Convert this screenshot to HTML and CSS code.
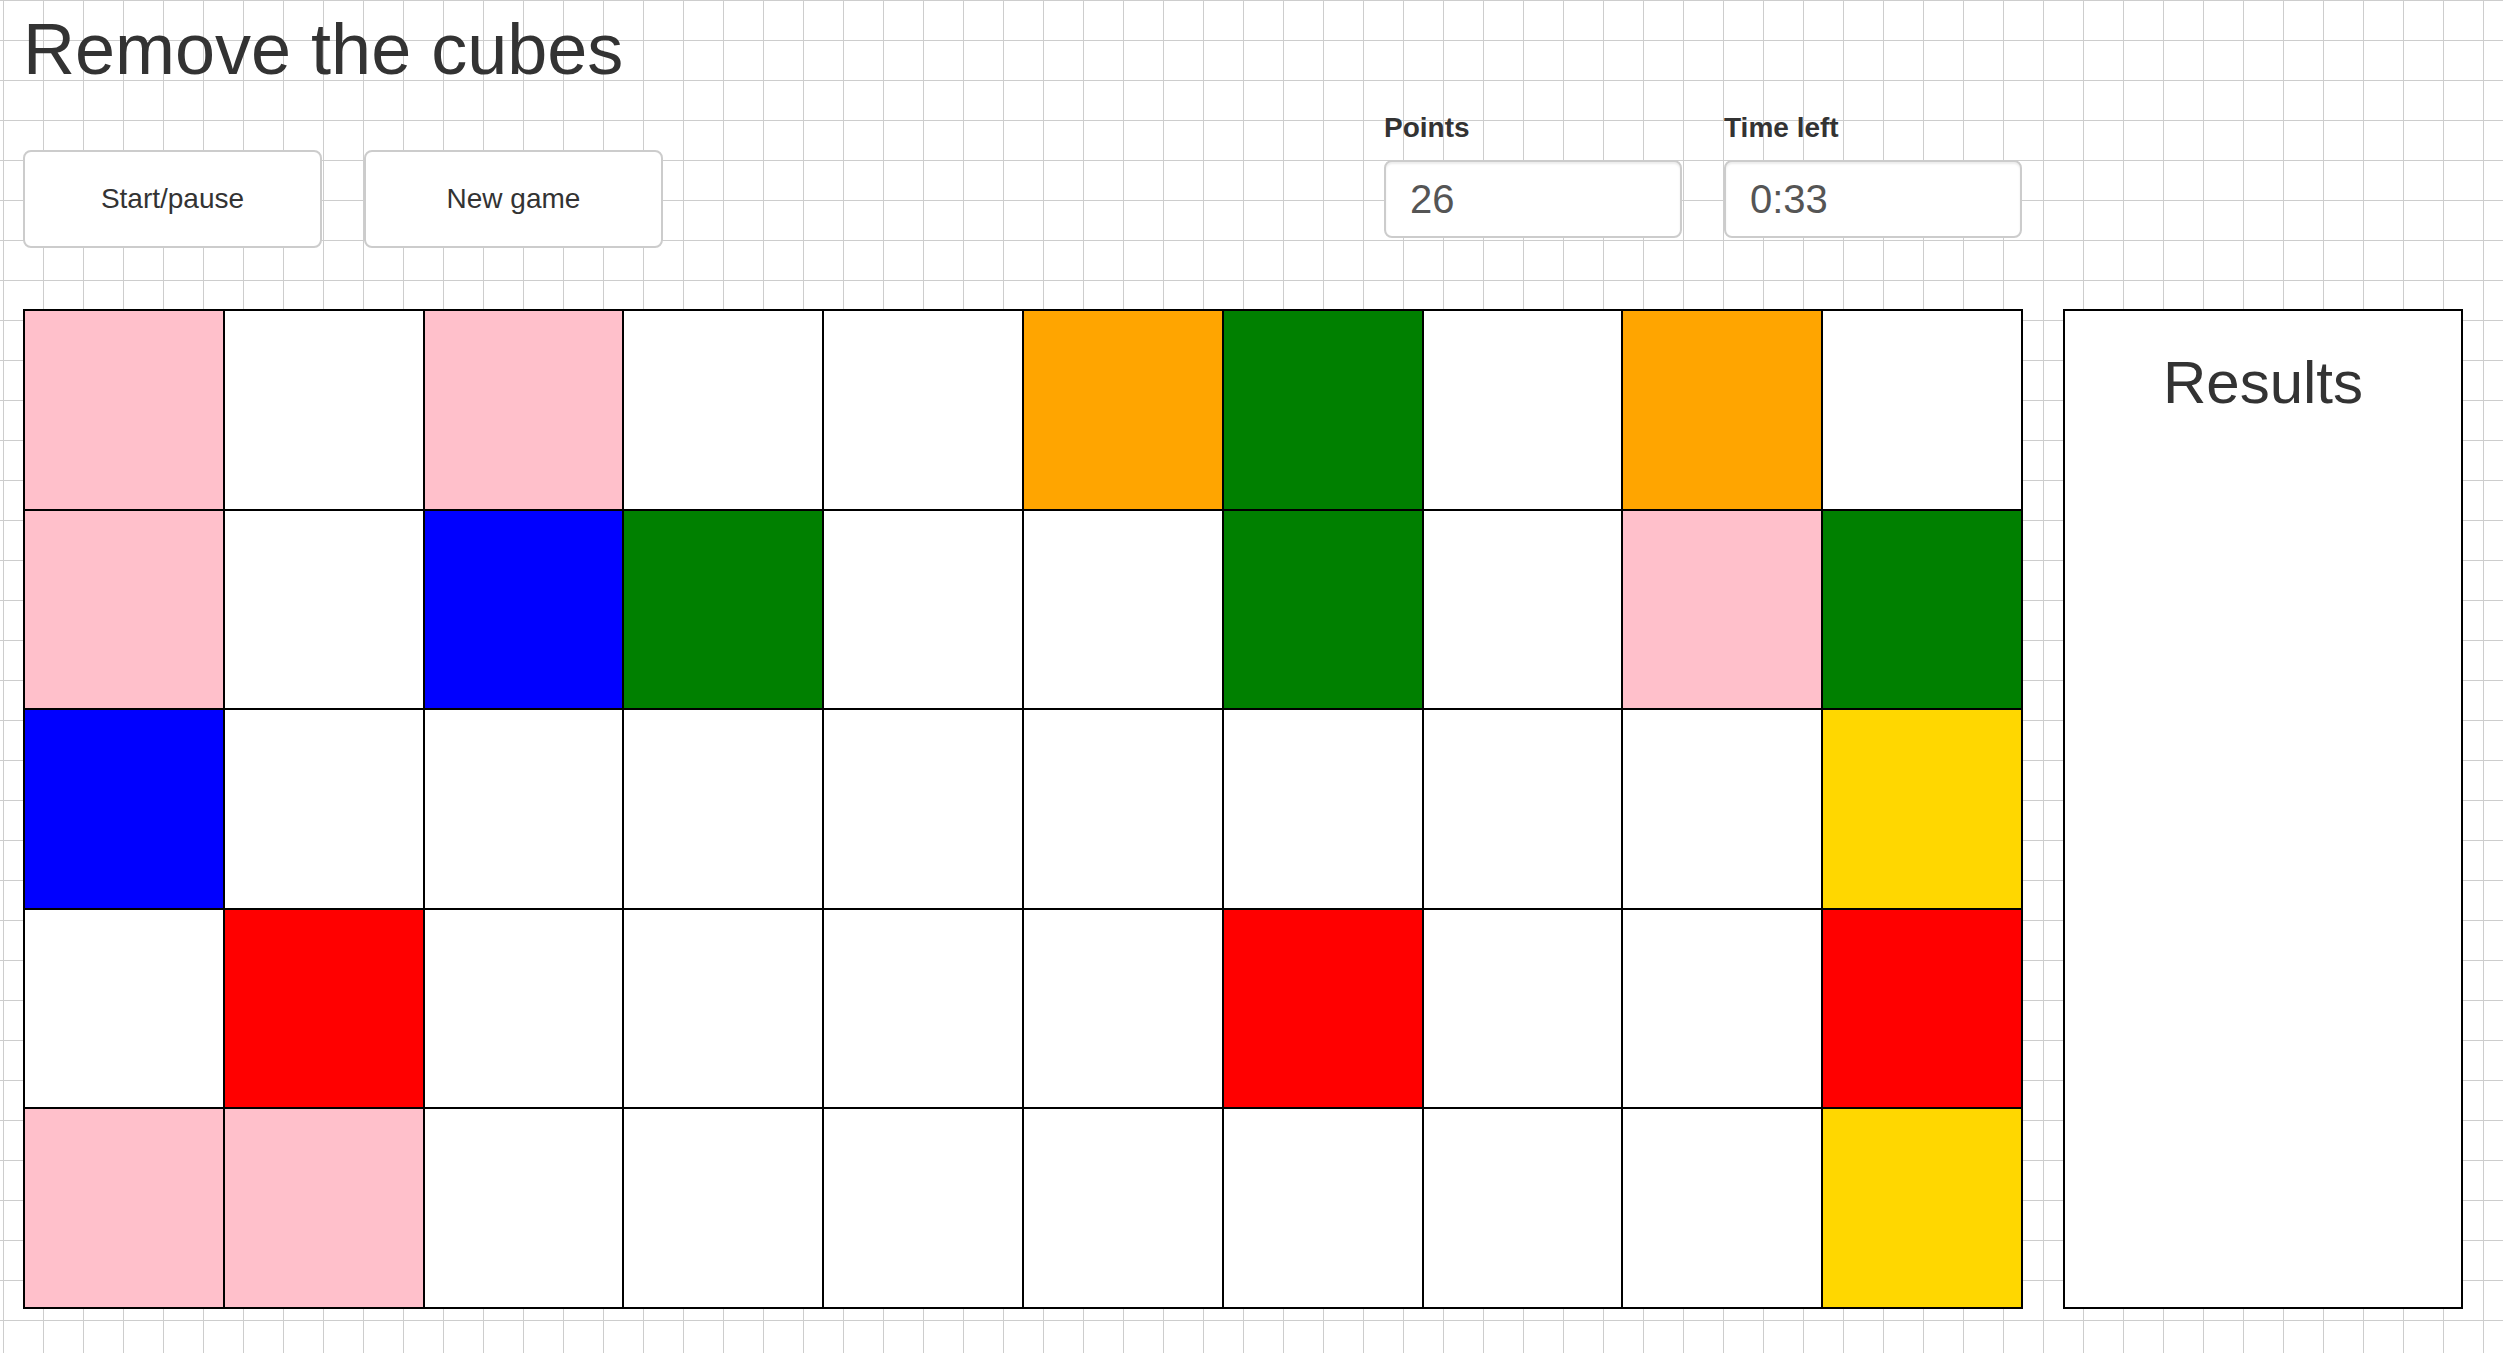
FILE: index.html
```html
<!DOCTYPE html>
<html lang="en">
<head>
<meta charset="utf-8">
<title>Remove the cubes</title>
<link rel="stylesheet" href="styles.css">
</head>
<body>
<div class="page">
  <h1 class="title">Remove the cubes</h1>
  <div class="controls">
    <div class="buttons">
      <button class="btn">Start/pause</button>
      <button class="btn">New game</button>
    </div>
    <div class="fields">
      <div class="field">
        <label class="field-label">Points</label>
        <div class="field-input">26</div>
      </div>
      <div class="field">
        <label class="field-label">Time left</label>
        <div class="field-input">0:33</div>
      </div>
    </div>
  </div>
  <div class="main">
    <div class="board">
      <div class="cell pink"></div><div class="cell"></div><div class="cell pink"></div><div class="cell"></div><div class="cell"></div><div class="cell orange"></div><div class="cell green"></div><div class="cell"></div><div class="cell orange"></div><div class="cell"></div>
      <div class="cell pink"></div><div class="cell"></div><div class="cell blue"></div><div class="cell green"></div><div class="cell"></div><div class="cell"></div><div class="cell green"></div><div class="cell"></div><div class="cell pink"></div><div class="cell green"></div>
      <div class="cell blue"></div><div class="cell"></div><div class="cell"></div><div class="cell"></div><div class="cell"></div><div class="cell"></div><div class="cell"></div><div class="cell"></div><div class="cell"></div><div class="cell gold"></div>
      <div class="cell"></div><div class="cell red"></div><div class="cell"></div><div class="cell"></div><div class="cell"></div><div class="cell"></div><div class="cell red"></div><div class="cell"></div><div class="cell"></div><div class="cell red"></div>
      <div class="cell pink"></div><div class="cell pink"></div><div class="cell"></div><div class="cell"></div><div class="cell"></div><div class="cell"></div><div class="cell"></div><div class="cell"></div><div class="cell"></div><div class="cell gold"></div>
    </div>
    <div class="results">
      <h2 class="results-title">Results</h2>
    </div>
  </div>
</div>
</body>
</html>
```
FILE: styles.css
```css
html {
  background-color: #ffffff;
  background-image:
    linear-gradient(to right, #cdcdcd 1px, transparent 1px),
    linear-gradient(to bottom, #cdcdcd 1px, transparent 1px);
  background-size: 40px 40px;
  background-position: 3px 0;
  min-height: 100%;
}

body {
  margin: 0;
  font-family: "Liberation Sans", Arial, Helvetica, sans-serif;
  color: #333333;
}

.page {
  padding: 9px 0 0 23px;
}

.title {
  margin: 0;
  font-size: 72px;
  font-weight: normal;
  line-height: 80px;
  height: 80px;
  color: #333333;
}

.controls {
  margin-top: 19px;
  width: 1999px;
  display: flex;
  justify-content: space-between;
  align-items: flex-start;
}

.buttons {
  display: flex;
  gap: 42px;
  margin-top: 42px;
}

.btn {
  width: 299px;
  height: 98px;
  box-sizing: border-box;
  background: #ffffff;
  border: 2px solid #cccccc;
  border-radius: 8px;
  font-family: "Liberation Sans", Arial, Helvetica, sans-serif;
  font-size: 28px;
  color: #333333;
  padding: 0;
  cursor: pointer;
}

.fields {
  display: flex;
  gap: 42px;
}

.field {
  width: 298px;
  display: flex;
  flex-direction: column;
}

.field-label {
  font-size: 28px;
  font-weight: bold;
  line-height: 40px;
  height: 40px;
  color: #333333;
  margin-bottom: 12px;
}

.field-input {
  height: 78px;
  box-sizing: border-box;
  background: #ffffff;
  border: 2px solid #cccccc;
  border-radius: 8px;
  box-shadow: inset 0 2px 2px rgba(0, 0, 0, 0.075);
  padding: 0 24px;
  font-size: 40px;
  color: #555555;
  display: flex;
  align-items: center;
}

.main {
  margin-top: 61px;
  display: flex;
  gap: 40px;
  align-items: flex-start;
}

.board {
  width: 2000px;
  height: 1000px;
  box-sizing: border-box;
  background: #000000;
  padding: 2px;
  display: grid;
  grid-template-columns: repeat(10, 1fr);
  grid-template-rows: repeat(5, 1fr);
  gap: 2px;
}

.cell {
  background: #ffffff;
}

.cell.pink { background: #ffc0cb; }
.cell.orange { background: #ffa500; }
.cell.green { background: #008000; }
.cell.blue { background: #0000ff; }
.cell.gold { background: #ffd700; }
.cell.red { background: #ff0000; }

.results {
  width: 400px;
  height: 1000px;
  box-sizing: border-box;
  background: #ffffff;
  border: 2px solid #000000;
  padding-top: 39px;
  text-align: center;
}

.results-title {
  margin: 0;
  font-size: 60px;
  font-weight: normal;
  line-height: 66px;
  color: #333333;
}
```
